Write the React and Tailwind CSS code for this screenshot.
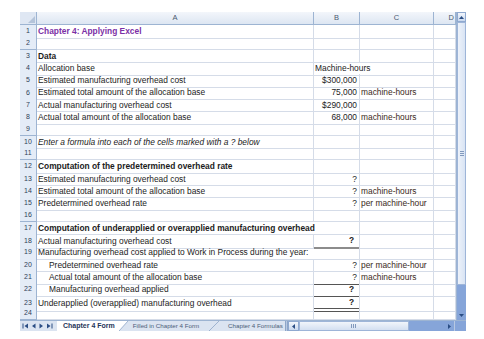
import React from "react";

const rows = [
  { a: "Chapter 4: Applying Excel", aCls: "font-bold text-[#7b2fa6]" },
  {},
  { a: "Data", aCls: "font-bold" },
  { a: "Allocation base", b: "Machine-hours", bLeft: true, bSpan: true },
  { a: "Estimated manufacturing overhead cost", b: "$300,000" },
  { a: "Estimated total amount of the allocation base", b: "75,000", c: "machine-hours" },
  { a: "Actual manufacturing overhead cost", b: "$290,000" },
  { a: "Actual total amount of the allocation base", b: "68,000", c: "machine-hours" },
  {},
  { a: "Enter a formula into each of the cells marked with a ? below", aCls: "italic" },
  {},
  { a: "Computation of the predetermined overhead rate", aCls: "font-bold" },
  { a: "Estimated manufacturing overhead cost", b: "?" },
  { a: "Estimated total amount of the allocation base", b: "?", c: "machine-hours" },
  { a: "Predetermined overhead rate", b: "?", c: "per machine-hour" },
  {},
  { a: "Computation of underapplied or overapplied manufacturing overhead", aCls: "font-bold", aSpan: true },
  { a: "Actual manufacturing overhead cost", b: "?", bBold: true, bBorder: "border-b-2 border-b-[#8c8c8c]" },
  { a: "Manufacturing overhead cost applied to Work in Process during the year:", aSpan: true },
  { a: "Predetermined overhead rate", indent: true, b: "?", c: "per machine-hour" },
  { a: "Actual total amount of the allocation base", indent: true, b: "?", c: "machine-hours", bBorder: "border-b-[1.5px] border-b-[#555]" },
  { a: "Manufacturing overhead applied", indent: true, b: "?", bBold: true, bBorder: "border-b-[1.5px] border-b-[#555]" },
  { a: "Underapplied (overapplied) manufacturing overhead", b: "?", bBold: true, bBorder: "border-b-[4px] border-double border-b-[#555]" },
  {},
];

const grid = "border-r border-b border-[#d5dce8]";

function Row({ r, n }) {
  return (
    <div className="grid grid-cols-[17px_277px_46px_74px_22px] h-[12.3px]">
      <div className="flex items-center justify-center bg-[#e4ecf7] border-r border-b border-[#9db4d2] text-[7px] text-[#2f3f57]">
        {n}
      </div>
      <div
        className={`${grid} ${r.aSpan ? "col-span-2" : ""} flex items-center whitespace-nowrap overflow-visible ${
          r.indent ? "pl-[12px]" : "pl-[1px]"
        } ${r.aCls || ""}`}
      >
        {r.a}
      </div>
      {!r.aSpan && (
        <div
          className={`${r.bSpan ? "col-span-2 border-b border-[#d5dce8] border-r" : grid} ${r.bBorder || ""} flex items-center whitespace-nowrap ${
            r.bLeft ? "justify-start pl-[1px]" : r.bBold ? "justify-end pr-[5px] font-bold" : "justify-end pr-[2px]"
          }`}
        >
          {r.b}
        </div>
      )}
      {!r.bSpan && <div className={`${grid} flex items-center whitespace-nowrap pl-[1px] text-[#3b2a22]`}>{r.c}</div>}
      <div className={grid}></div>
    </div>
  );
}

function NavArrow({ dir, bar }) {
  return (
    <svg width="7" height="6" viewBox="0 0 7 6" className="fill-[#2a4d84]">
      {dir === "l" ? (
        <>
          {bar && <rect x="0.5" y="0.5" width="1" height="5" />}
          <polygon points={bar ? "6,0.5 2.5,3 6,5.5" : "5.5,0.5 2,3 5.5,5.5"} />
        </>
      ) : (
        <>
          <polygon points={bar ? "1,0.5 4.5,3 1,5.5" : "1.5,0.5 5,3 1.5,5.5"} />
          {bar && <rect x="5.5" y="0.5" width="1" height="5" />}
        </>
      )}
    </svg>
  );
}

export default function App() {
  return (
    <div className="w-[484px] h-[339px] bg-white pl-[20px] pt-[12px] font-['Liberation_Sans',Arial,sans-serif] text-[#1c1c1c] text-[8.4px]">
      <div className="w-[446px] flex">
        {/* sheet grid */}
        <div className="w-[436px] flex flex-col">
          <div className="grid grid-cols-[17px_277px_46px_74px_22px] h-[13px] text-[7.5px] text-[#4a5970]">
            <div className="relative bg-[#dfe7f3] border-r border-b border-[#9db4d2]">
              <svg width="7" height="7" viewBox="0 0 7 7" className="absolute right-[1px] bottom-[1px] fill-[#b4c4da]">
                <polygon points="7,0 7,7 0,7" />
              </svg>
            </div>
            {["A", "B", "C", "D"].map((l) => (
              <div
                key={l}
                className={`flex items-center bg-gradient-to-b from-[#f3f6fb] to-[#dde6f2] border-r border-b border-[#9db4d2] ${
                  l === "D" ? "justify-end pr-[1px]" : "justify-center"
                }`}
              >
                {l}
              </div>
            ))}
          </div>
          {rows.map((r, i) => (
            <Row key={i} r={r} n={i + 1} />
          ))}
        </div>

        {/* vertical scrollbar */}
        <div className="w-[10px] flex flex-col bg-[#86a5d9] border-l border-[#9db4d2]">
          <div className="h-[10px] flex items-center justify-center bg-gradient-to-b from-[#f2f6fc] to-[#c9d8ee] border border-[#8fa9d0]">
            <svg width="5" height="3" viewBox="0 0 5 3" className="fill-[#2a4d84]">
              <polygon points="0,3 2.5,0 5,3" />
            </svg>
          </div>
          <div className="h-[263px] flex items-center justify-center bg-gradient-to-r from-[#edf2fa] to-[#d9e4f4] border border-[#9eb5d8]">
            <div className="flex flex-col gap-[1px]">
              <div className="w-[4px] h-[1px] bg-[#8199bd]" />
              <div className="w-[4px] h-[1px] bg-[#8199bd]" />
              <div className="w-[4px] h-[1px] bg-[#8199bd]" />
            </div>
          </div>
          <div className="flex-1" />
          <div className="h-[9px] flex items-center justify-center">
            <svg width="5" height="3" viewBox="0 0 5 3" className="fill-[#2a4d84]">
              <polygon points="0,0 2.5,3 5,0" />
            </svg>
          </div>
        </div>
      </div>

      {/* sheet tabs + horizontal scrollbar */}
      <div className="w-[446px] h-[11px] flex items-stretch bg-[#dbe4f1] border-t border-[#9db4d2]">
        <div className="w-[37px] flex items-center gap-[1px] pl-[2px]">
          <NavArrow dir="l" bar />
          <NavArrow dir="l" />
          <NavArrow dir="r" />
          <NavArrow dir="r" bar />
        </div>
        <div className="flex items-stretch text-[6.2px] whitespace-nowrap">
          <div className="relative flex items-center bg-white pl-[6px] pr-[4px] font-bold text-[#1f3559] text-[7px]">
            Chapter 4 Form
          </div>
          <svg width="9" height="10" viewBox="0 0 9 10" className="shrink-0">
            <polygon points="0,0 0,10 9,0" fill="#ffffff" />
            <line x1="0" y1="10" x2="9" y2="0" stroke="#8ea6c8" strokeWidth="0.8" />
          </svg>
          <div className="flex items-center pl-[5px] pr-[10px] text-[#4b5d78]">Filled in Chapter 4 Form</div>
          <svg width="10" height="10" viewBox="0 0 10 10" className="shrink-0">
            <line x1="0" y1="10" x2="10" y2="0" stroke="#8ea6c8" strokeWidth="0.8" />
          </svg>
          <div className="flex items-center pl-[9px] text-[#4b5d78]">Chapter 4 Formulas</div>
        </div>
        <div className="w-[3px] ml-[2px] bg-[#b8c9e2] border-x border-[#8ea6c8]" />
        <div className="flex-1 flex items-stretch bg-[#86a5d9]">
          <div className="w-[11px] flex items-center justify-center bg-gradient-to-b from-[#f2f6fc] to-[#c9d8ee] border border-[#8fa9d0]">
            <svg width="3" height="5" viewBox="0 0 3 5" className="fill-[#2a4d84]">
              <polygon points="3,0 0,2.5 3,5" />
            </svg>
          </div>
          <div className="w-[110px] flex items-center justify-center bg-gradient-to-b from-[#f1f5fb] to-[#d3dff1] border border-[#9eb5d8]">
            <div className="flex gap-[1px]">
              <div className="w-[1px] h-[4px] bg-[#8199bd]" />
              <div className="w-[1px] h-[4px] bg-[#8199bd]" />
              <div className="w-[1px] h-[4px] bg-[#8199bd]" />
            </div>
          </div>
          <div className="flex-1" />
          <div className="w-[10px] flex items-center justify-center">
            <svg width="3" height="5" viewBox="0 0 3 5" className="fill-[#2a4d84]">
              <polygon points="0,0 3,2.5 0,5" />
            </svg>
          </div>
          <div className="w-[12px] bg-[#86a5d9] border-l border-[#b8c9e2]" />
        </div>
      </div>
    </div>
  );
}
